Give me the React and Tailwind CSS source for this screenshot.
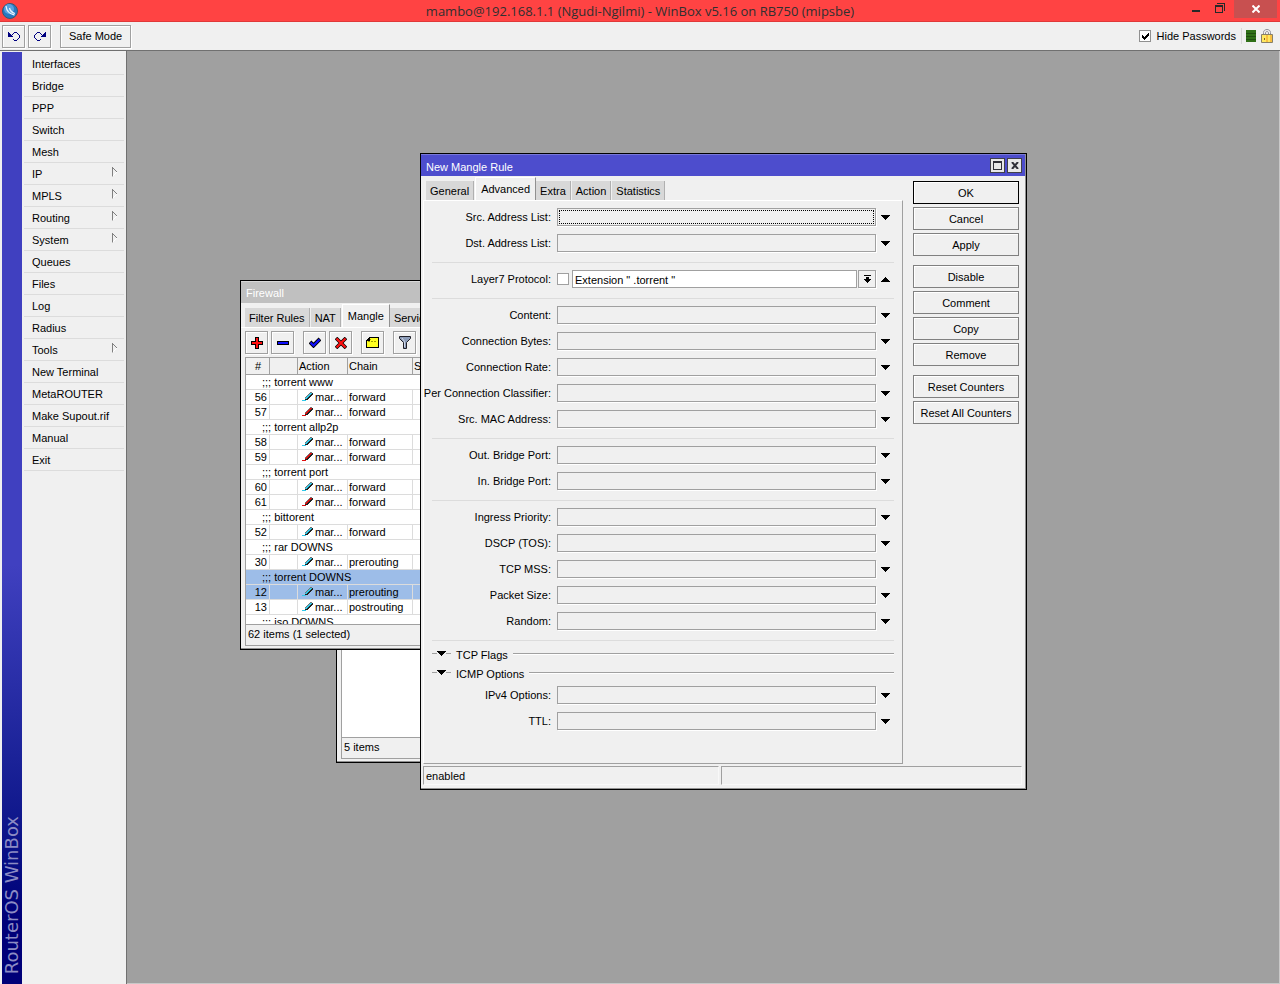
import React, { useState } from "react";

const menuItems = [
  { label: "Interfaces" },
  { label: "Bridge" },
  { label: "PPP" },
  { label: "Switch" },
  { label: "Mesh" },
  { label: "IP", sub: true },
  { label: "MPLS", sub: true },
  { label: "Routing", sub: true },
  { label: "System", sub: true },
  { label: "Queues" },
  { label: "Files" },
  { label: "Log" },
  { label: "Radius" },
  { label: "Tools", sub: true },
  { label: "New Terminal" },
  { label: "MetaROUTER" },
  { label: "Make Supout.rif" },
  { label: "Manual" },
  { label: "Exit" },
];

const firewallRows = [
  { comment: "torrent www" },
  { id: 56, chain: "forward", color: "#30c8e8" },
  { id: 57, chain: "forward", color: "#e01010" },
  { comment: "torrent allp2p" },
  { id: 58, chain: "forward", color: "#30c8e8" },
  { id: 59, chain: "forward", color: "#e01010" },
  { comment: "torrent port" },
  { id: 60, chain: "forward", color: "#30c8e8" },
  { id: 61, chain: "forward", color: "#e01010" },
  { comment: "bittorent" },
  { id: 52, chain: "forward", color: "#30c8e8" },
  { comment: "rar DOWNS" },
  { id: 30, chain: "prerouting", color: "#30c8e8" },
  { comment: "torrent DOWNS", selected: true },
  { id: 12, chain: "prerouting", color: "#30c8e8", selected: true },
  { id: 13, chain: "postrouting", color: "#30c8e8" },
  { comment: "iso DOWNS" },
];

const fieldGroups = [
  [
    "Content",
    "Connection Bytes",
    "Connection Rate",
    "Per Connection Classifier",
    "Src. MAC Address",
  ],
  ["Out. Bridge Port", "In. Bridge Port"],
  ["Ingress Priority", "DSCP (TOS)", "TCP MSS", "Packet Size", "Random"],
];

const actionGroups = [
  ["OK", "Cancel", "Apply"],
  ["Disable", "Comment", "Copy", "Remove"],
  ["Reset Counters", "Reset All Counters"],
];

const Triangle = ({ up }) => (
  <svg width="9" height="5" viewBox="0 0 9 5" shapeRendering="crispEdges">
    <path
      d={
        up
          ? "M4 0h1v1h1v1h1v1h1v1h1v1H0V4h1V3h1V2h1V1h1z"
          : "M0 0h9v1H8v1H7v1H6v1H5v1H4V4H3V3H2V2H1V1H0z"
      }
    />
  </svg>
);

const PenIcon = ({ color }) => (
  <svg
    className="inline-block shrink-0"
    width="11"
    height="10"
    viewBox="0 0 11 10"
    shapeRendering="crispEdges"
  >
    <path
      d="M8 1h2v1H8zM7 2h2v1H7zM6 3h2v1H6zM5 4h2v1H5zM4 5h2v1H4zM3 6h2v1H3zM0 8h4v1H0z"
      fill={color}
    />
    <path
      d="M8 0h2v1H8zM7 1h1v1H7zM6 2h1v1H6zM5 3h1v1H5zM4 4h1v1H4zM3 5h1v1H3z"
      fill="#787878"
    />
    <path
      d="M10 1h1v1h-1zM9 2h2v1H9zM8 3h2v1H8zM7 4h2v1H7zM6 5h2v1H6zM5 6h2v1H5zM3 7h3v1H3z"
      fill="#202020"
    />
  </svg>
);

const TitleButton = ({ label, children }) => (
  <button
    type="button"
    aria-label={label}
    className="flex h-[15px] w-[15px] items-center justify-center border border-[#404048] bg-[#e8e8e8]"
  >
    {children}
  </button>
);

const ToolButton = ({ label, children }) => (
  <button
    type="button"
    aria-label={label}
    className="flex h-[23px] w-[23px] shrink-0 items-center justify-center border border-[#a0a0a0] bg-[#f0f0f0] shadow-[inset_1px_1px_0_#fff,1px_1px_0_#fff]"
  >
    {children}
  </button>
);

const Tab = ({ label, active, onClick }) => (
  <button
    type="button"
    onClick={onClick}
    className={
      active
        ? "h-[23px] shrink-0 border-r border-t border-l border-t-white border-l-white border-r-[#909090] bg-[#f0f0f0] px-[5px] pb-px whitespace-nowrap"
        : "mr-px h-[19px] shrink-0 border-r border-[#b0b0b0] bg-[#d8d8d8] px-1 whitespace-nowrap"
    }
  >
    {label}
  </button>
);

const Separator = () => (
  <div className="h-[10px] pt-[6px]">
    <div className="h-px bg-[#dcdcdc]" />
  </div>
);

const Field = ({ label, focused }) => {
  const id = label.toLowerCase().replace(/[^a-z0-9]+/g, "-");
  return (
    <div className="flex h-[26px] items-center">
      <label
        htmlFor={id}
        className="flex w-[125px] shrink-0 justify-end pr-[6px] whitespace-nowrap"
      >
        {label}:
      </label>
      <div className="flex h-[18px] flex-1 border border-[#a0a0a0] p-px shadow-[1px_1px_0_#fff]">
        <input
          id={id}
          className={
            focused
              ? "w-full border border-dotted border-black bg-transparent outline-none"
              : "w-full bg-transparent outline-none"
          }
        />
      </div>
      <button
        type="button"
        aria-label={`Expand ${label}`}
        className="flex h-[18px] w-[18px] items-center justify-center"
      >
        <Triangle />
      </button>
    </div>
  );
};

const Section = ({ label }) => (
  <button type="button" className="flex h-[19px] w-full items-center text-left">
    <span className="h-px w-[5px] bg-[#a0a0a0]" />
    <Triangle />
    <span className="h-px w-[5px] bg-[#a0a0a0]" />
    <span className="px-[5px] pt-[2px]">{label}</span>
    <span className="h-px flex-1 bg-[#a0a0a0] shadow-[0_1px_0_#fff]" />
  </button>
);

const MangleRuleWindow = () => {
  const [tab, setTab] = useState("Advanced");
  const [negate, setNegate] = useState(false);
  const [layer7, setLayer7] = useState('Extension " .torrent "');

  return (
    <section className="absolute top-[102px] left-[293px] flex w-[607px] flex-col border border-black bg-[#f0f0f0] shadow-[inset_-1px_-1px_0_#909090]">
      <header className="mr-px flex h-[22px] items-center gap-[2px] border-t border-[#7878d8] bg-[#4d4dcd] pr-[3px] pl-[5px] text-white">
        <h2 className="flex-1 pt-[2px]">New Mangle Rule</h2>
        <TitleButton label="Maximize">
          <svg width="9" height="9" viewBox="0 0 9 9" shapeRendering="crispEdges">
            <path d="M0 0h9v9H0zM1 2v6h7V2z" fill="#303038" fillRule="evenodd" />
          </svg>
        </TitleButton>
        <TitleButton label="Close">
          <svg width="8" height="7" viewBox="0 0 8 7">
            <path d="M1 0l6 7M7 0L1 7" stroke="#303038" strokeWidth="2" />
          </svg>
        </TitleButton>
      </header>

      <div className="flex pr-[7px] pl-[2px]">
        <div className="flex min-w-0 flex-1 flex-col pt-[2px]">
          <nav className="flex h-[22px] items-end pl-[3px]">
            {["General", "Advanced", "Extra", "Action", "Statistics"].map((t) => (
              <Tab key={t} label={t} active={t === tab} onClick={() => setTab(t)} />
            ))}
          </nav>
          <div className="border-t border-r border-b border-l border-t-white border-r-[#a0a0a0] border-b-[#a0a0a0] border-l-white px-2 pt-[3px] pb-[29px]">
            <Field label="Src. Address List" focused />
            <Field label="Dst. Address List" />
            <Separator />
            <div className="flex h-[26px] items-center">
              <label
                htmlFor="layer7"
                className="flex w-[125px] shrink-0 justify-end pr-[6px] whitespace-nowrap"
              >
                Layer7 Protocol:
              </label>
              <input
                type="checkbox"
                aria-label="Not"
                checked={negate}
                onChange={(e) => setNegate(e.target.checked)}
                className="mr-[3px] h-3 w-3 shrink-0 appearance-none border border-[#a0a0a0] bg-white checked:bg-black"
              />
              <input
                id="layer7"
                value={layer7}
                onChange={(e) => setLayer7(e.target.value)}
                className="h-[18px] min-w-0 flex-1 border border-[#a0a0a0] bg-white pt-px pl-[2px] outline-none"
              />
              <button
                type="button"
                aria-label="Choose Layer7 Protocol"
                className="ml-px flex h-[18px] w-[18px] items-center justify-center border border-[#a0a0a0] shadow-[1px_1px_0_#fff]"
              >
                <svg width="7" height="8" viewBox="0 0 7 8" shapeRendering="crispEdges">
                  <path d="M0 0h7v1H0zM2 2h3v2h2v1H6v1H5v1H4v1H3V7H2V6H1V5H0V4h2z" />
                </svg>
              </button>
              <button
                type="button"
                aria-label="Collapse Layer7 Protocol"
                className="flex h-[18px] w-[18px] items-center justify-center"
              >
                <Triangle up />
              </button>
            </div>
            {fieldGroups.map((group) => (
              <React.Fragment key={group[0]}>
                <Separator />
                {group.map((label) => (
                  <Field key={label} label={label} />
                ))}
              </React.Fragment>
            ))}
            <Separator />
            <Section label="TCP Flags" />
            <Section label="ICMP Options" />
            <Field label="IPv4 Options" />
            <Field label="TTL" />
          </div>
        </div>

        <div className="flex w-[116px] shrink-0 flex-col gap-[9px] pt-[5px] pl-[10px]">
          {actionGroups.map((group) => (
            <div key={group[0]} className="flex flex-col gap-[3px]">
              {group.map((label) => (
                <button
                  key={label}
                  type="button"
                  className={
                    label === "OK"
                      ? "h-[23px] border border-black shadow-[inset_1px_1px_0_#fff]"
                      : "h-[23px] border border-[#808080] shadow-[inset_1px_1px_0_#fff]"
                  }
                >
                  {label}
                </button>
              ))}
            </div>
          ))}
        </div>
      </div>

      <footer className="flex gap-[2px] pt-[2px] pr-1 pb-1 pl-[2px]">
        <div className="h-[19px] flex-1 border border-t-[#a0a0a0] border-r-[#f8f8f8] border-b-[#f8f8f8] border-l-[#a0a0a0] pt-[2px] pl-[2px]">
          enabled
        </div>
        <div className="h-[19px] w-[301px] border border-t-[#a0a0a0] border-r-[#f8f8f8] border-b-[#f8f8f8] border-l-[#a0a0a0]" />
      </footer>
    </section>
  );
};

const FirewallWindow = () => {
  const [tab, setTab] = useState("Mangle");

  return (
    <section className="absolute top-[229px] left-[113px] flex h-[370px] w-[600px] flex-col border border-black bg-[#f0f0f0] shadow-[inset_-1px_-1px_0_#909090]">
      <header className="mr-px h-[22px] shrink-0 border-t border-[#d8d8d8] bg-[#c0c0c0] pt-[4px] pl-[5px] text-white">
        Firewall
      </header>
      <nav className="flex h-[24px] shrink-0 items-end pl-1">
        {["Filter Rules", "NAT", "Mangle", "Service Ports"].map((t) => (
          <Tab key={t} label={t} active={t === tab} onClick={() => setTab(t)} />
        ))}
      </nav>
      <div className="flex h-[30px] shrink-0 gap-[9px] border-t border-white pt-[3px] pl-1">
        <div className="flex gap-[3px]">
          <ToolButton label="Add">
            <svg width="12" height="12" viewBox="0 0 12 12" shapeRendering="crispEdges">
              <path d="M4 0h4v4h4v4H8v4H4V8H0V4h4z" />
              <path d="M5 1h2v4h4v2H7v4H5V7H1V5h4z" fill="#ff1010" />
            </svg>
          </ToolButton>
          <ToolButton label="Remove">
            <svg width="12" height="4" viewBox="0 0 12 4" shapeRendering="crispEdges">
              <path d="M0 0h12v4H0z" />
              <path d="M1 1h10v2H1z" fill="#1010ff" />
            </svg>
          </ToolButton>
        </div>
        <div className="flex gap-[3px]">
          <ToolButton label="Enable">
            <svg width="12" height="11" viewBox="0 0 12 11">
              <path d="M1 5l3.500 3.500L11 2" fill="none" stroke="#000" strokeWidth="4" />
              <path d="M1.500 5.500l3 3L10.500 2.500" fill="none" stroke="#1010ff" strokeWidth="2.200" />
            </svg>
          </ToolButton>
          <ToolButton label="Disable">
            <svg width="12" height="12" viewBox="0 0 12 12">
              <path d="M1 1l10 10M11 1L1 11" stroke="#000" strokeWidth="3.600" />
              <path d="M1.500 1.500l9 9M10.500 1.500l-9 9" stroke="#ff1010" strokeWidth="2.200" />
            </svg>
          </ToolButton>
        </div>
        <ToolButton label="Comment">
          <svg width="13" height="11" viewBox="0 0 13 11" shapeRendering="crispEdges">
            <path d="M3 0h10v11H0V3h1V2h1V1h1z" />
            <path d="M4 1h8v9H1V4h3z" fill="#ffff20" />
            <path d="M2 4h2v1H2zM5 4h2v1H5zM8 4h2v1H8zM4 2h1v1H4z" fill="#a0a000" />
          </svg>
        </ToolButton>
        <ToolButton label="Filter">
          <svg width="12" height="13" viewBox="0 0 12 13">
            <path
              d="M.5.500h11v2L7.500 6.500v6h-3v-6L.5 2.500z"
              fill="#8c9cb8"
              stroke="#202028"
            />
            <path d="M3 2l2.500 3.500V11" fill="none" stroke="#d0d8e8" />
          </svg>
        </ToolButton>
      </div>
      <div className="mr-1 ml-1 min-h-0 flex-1 overflow-hidden border-t border-l border-[#a0a0a0] bg-white">
        <table className="w-full table-fixed border-separate border-spacing-0">
          <colgroup>
            <col className="w-[24px]" />
            <col className="w-[28px]" />
            <col className="w-[50px]" />
            <col className="w-[65px]" />
            <col />
          </colgroup>
          <thead>
            <tr className="h-[17px] bg-[#f0f0f0] text-left [&>th]:border-r [&>th]:border-b [&>th]:border-[#a0a0a0] [&>th]:p-0 [&>th]:pl-px [&>th]:leading-4 [&>th]:font-normal">
              <th className="text-center">#</th>
              <th />
              <th>Action</th>
              <th>Chain</th>
              <th>Src.</th>
            </tr>
          </thead>
          <tbody>
            {firewallRows.map((row) => (
              <tr
                key={row.comment || row.id}
                className={
                  row.selected
                    ? "h-[15px] bg-[#9dbde8] leading-[14px]"
                    : "h-[15px] leading-[14px]"
                }
              >
                {row.comment ? (
                  <td
                    colSpan={5}
                    className="border-b border-[#dcdcdc] p-0 pl-4 whitespace-pre"
                  >
                    ;;; {row.comment}
                  </td>
                ) : (
                  <>
                    <td className="border-r border-b border-[#dcdcdc] p-0 pr-[2px] text-right">
                      {row.id}
                    </td>
                    <td className="border-r border-b border-[#dcdcdc] p-0" />
                    <td className="border-r border-b border-[#dcdcdc] p-0 pl-1">
                      <span className="flex items-center gap-[2px]">
                        <PenIcon color={row.color} />
                        mar...
                      </span>
                    </td>
                    <td className="border-r border-b border-[#dcdcdc] p-0 pl-px">
                      {row.chain}
                    </td>
                    <td className="border-b border-[#dcdcdc] p-0" />
                  </>
                )}
              </tr>
            ))}
          </tbody>
        </table>
      </div>
      <footer className="mx-1 mb-[3px] h-[22px] shrink-0 border-t border-b border-l border-[#a0a0a0] pt-[2px] pl-[2px]">
        62 items (1 selected)
      </footer>
    </section>
  );
};

const ListWindow = () => (
  <section className="absolute top-[349px] left-[209px] flex h-[363px] w-[500px] flex-col border border-black bg-[#f0f0f0] pr-1 pb-[3px] pl-1 shadow-[inset_-1px_-1px_0_#909090]">
    <div className="flex-1 border-l border-[#a0a0a0] bg-white" />
    <footer className="h-[22px] border-t border-b border-l border-[#a0a0a0] pt-[2px] pl-[2px]">
      5 items
    </footer>
  </section>
);

const App = () => {
  const [hidePasswords, setHidePasswords] = useState(true);

  return (
    <div className="flex min-h-screen flex-col bg-[#f0f0f0] font-['Liberation_Sans',sans-serif] text-[11px] leading-[14px] text-black">
      {/* Title bar */}
      <header className="flex h-[22px] border-b border-[#e03838] bg-[#ff4343]">
        <div className="w-[116px] pt-[3px] pl-[2px]">
          <svg width="16" height="16" viewBox="0 0 16 16">
            <circle cx="8" cy="8" r="7.500" fill="#2878c0" stroke="#385870" />
            <circle cx="7" cy="6" r="5" fill="#58a0e0" />
            <path
              d="M4 3c.5 5 3.500 8 8.500 9M7.500 5c.5 2.500 2.500 4.500 5.500 5.500"
              fill="none"
              stroke="#e8f4ff"
              strokeWidth="1.300"
            />
          </svg>
        </div>
        <h1 className="flex-1 text-center font-['Open_Sans',sans-serif] text-[13px] leading-[22px] text-[#303030]">
          mambo@192.168.1.1 (Ngudi-Ngilmi) - WinBox v5.16 on RB750 (mipsbe)
        </h1>
        <div className="flex w-[116px] justify-end pr-[3px]">
          <button type="button" aria-label="Minimize" className="flex w-6 justify-center pt-[10px]">
            <svg width="8" height="2">
              <path d="M0 0h8v2H0z" fill="#282828" />
            </svg>
          </button>
          <button type="button" aria-label="Restore" className="flex w-6 justify-center pt-[3px]">
            <svg width="10" height="10" viewBox="0 0 10 10" shapeRendering="crispEdges">
              <path
                d="M2 0h8v8H9V1H2zM0 2h8v8H0zM1 4v5h6V4z"
                fill="#282828"
                fillRule="evenodd"
              />
            </svg>
          </button>
          <button
            type="button"
            aria-label="Close"
            className="ml-[2px] flex h-[18px] w-[43px] items-center justify-center bg-[#c85050]"
          >
            <svg width="8" height="8" viewBox="0 0 8 8">
              <path d="M.5.500l7 7M7.500.500l-7 7" stroke="#fff" strokeWidth="2" />
            </svg>
          </button>
        </div>
      </header>

      {/* Toolbar */}
      <div className="flex h-[29px] items-center border-b border-[#707070] pr-[7px] pl-[2px]">
        <div className="flex flex-1 items-center gap-[3px]">
          <ToolButton label="Undo">
            <svg width="12" height="9" viewBox="0 0 12 9" shapeRendering="crispEdges">
              <path
                d="M0 0h1v1h1v1h1v1h1v1h1v1H0zM6 0h3v1H6zM5 1h1v1H5zM4 2h1v1H4zM9 1h1v1H9zM10 2h1v1h-1zM11 3h1v3h-1zM10 6h1v1h-1zM9 7h1v1H9zM6 8h3v1H6zM5 7h1v1H5z"
                fill="#000080"
              />
            </svg>
          </ToolButton>
          <ToolButton label="Redo">
            <svg width="12" height="9" viewBox="0 0 12 9" shapeRendering="crispEdges">
              <path
                d="M12 0h-1v1h-1v1H9v1H8v1H7v1h5zM3 0h3v1H3zM6 1h1v1H6zM7 2h1v1H7zM2 1h1v1H2zM1 2h1v1H1zM0 3h1v3H0zM1 6h1v1H1zM2 7h1v1H2zM3 8h3v1H3zM6 7h1v1H6z"
                fill="#000080"
              />
            </svg>
          </ToolButton>
          <button
            type="button"
            className="ml-[6px] h-[23px] border border-[#a0a0a0] px-2 shadow-[inset_1px_1px_0_#fff,1px_1px_0_#fff]"
          >
            Safe Mode
          </button>
        </div>
        <div className="flex items-center">
          <span className="relative mr-[6px] flex h-3 w-3">
            <input
              id="hide-passwords"
              type="checkbox"
              checked={hidePasswords}
              onChange={(e) => setHidePasswords(e.target.checked)}
              className="h-3 w-3 appearance-none border border-[#909090] bg-white"
            />
            {hidePasswords && (
              <svg
                className="pointer-events-none absolute top-[3px] left-[3px]"
                width="7"
                height="7"
                viewBox="0 0 7 7"
                shapeRendering="crispEdges"
              >
                <path d="M6 0h1v3H6v1H5v1H4v1H3v1H2V6H1V5H0V2h1v1h1v1h1V3h1V2h1V1h1z" />
              </svg>
            )}
          </span>
          <label htmlFor="hide-passwords" className="mr-[5px]">
            Hide Passwords
          </label>
          <div className="mr-1 h-4 w-px bg-[#d8d8d8]" />
          <svg width="10" height="12" viewBox="0 0 10 12" shapeRendering="crispEdges">
            <path d="M0 0h10v12H0z" fill="#307018" />
            <path d="M0 3h10v1H0zM0 6h10v1H0zM0 9h10v1H0z" fill="#205010" />
          </svg>
          <svg className="ml-[5px]" width="12" height="14" viewBox="0 0 12 14">
            <path
              d="M2.500 6V3.500c0-4 7-4 7 0V6M4.500 6V4c0-2 3-2 3 0v2"
              fill="none"
              stroke="#909098"
            />
            <path d="M.5 5.500h11v8H.5z" fill="#ffe860" stroke="#888068" />
            <path d="M5 6h2v7H5zM9 6h2v7H9z" fill="#f8c040" />
            <path d="M3 9h1v2H3z" fill="#806020" />
          </svg>
        </div>
      </div>

      <div className="flex flex-1">
        {/* Brand strip and menu */}
        <aside className="flex w-[127px] shrink-0 border-r border-[#707070] pl-[2px]">
          <div className="mt-px flex w-5 items-start justify-end bg-linear-to-b from-[#4040c0] from-55% to-[#000078] to-93% [writing-mode:vertical-rl]">
            <span className="rotate-180 pt-[10px] font-['DejaVu_Sans',sans-serif] text-[18px] leading-5 whitespace-nowrap text-[#8c8cc4]">
              RouterOS WinBox
            </span>
          </div>
          <nav className="flex-1 pt-[2px] pr-[2px] pl-[2px]">
            {menuItems.map((item) => (
              <a
                key={item.label}
                href="#"
                className="flex h-[22px] items-center justify-between border-b border-[#dcdcdc] pr-[6px] pl-2"
              >
                {item.label}
                {item.sub && (
                  <svg
                    className="mb-[3px]"
                    width="6"
                    height="10"
                    viewBox="0 0 6 10"
                  >
                    <path d="M.5 0v10" stroke="#808080" />
                    <path d="M.5.500l4.500 4.500" stroke="#808080" />
                    <path d="M5 5L.5 9.500" stroke="#fff" />
                  </svg>
                )}
              </a>
            ))}
          </nav>
        </aside>

        {/* Workspace */}
        <main className="relative flex-1 overflow-hidden border-r border-b border-[#c8c8c8] bg-[#a0a0a0]">
          <ListWindow />
          <FirewallWindow />
          <MangleRuleWindow />
        </main>
      </div>
    </div>
  );
};

export default App;
